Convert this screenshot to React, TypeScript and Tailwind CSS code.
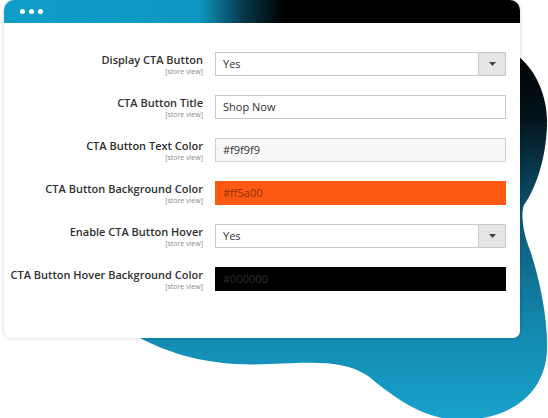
import { ChevronDown } from 'lucide-react';

type Row = {
  label: string;
  kind: 'select' | 'text';
  value: string;
  box?: string;
  text?: string;
};

const rows: Row[] = [
  { label: 'Display CTA Button', kind: 'select', value: 'Yes' },
  { label: 'CTA Button Title', kind: 'text', value: 'Shop Now', box: 'bg-white border-[#c9c9c9]', text: 'text-[#333]' },
  { label: 'CTA Button Text Color', kind: 'text', value: '#f9f9f9', box: 'bg-[#f7f7f7] border-[#cfcfcf]', text: 'text-[#333]' },
  { label: 'CTA Button Background Color', kind: 'text', value: '#ff5a00', box: 'bg-[#ff5a14] border-[#ff5a14]', text: 'text-[#8a3106]' },
  { label: 'Enable CTA Button Hover', kind: 'select', value: 'Yes' },
  { label: 'CTA Button Hover Background Color', kind: 'text', value: '#000000', box: 'bg-black border-black', text: 'text-[#2e2e2e]' },
];

function Blob() {
  return (
    <svg className="absolute inset-0 w-[548px] h-[418px]" viewBox="0 0 548 418">
      <defs>
        <linearGradient id="blobFill" x1="0" y1="55" x2="0" y2="418" gradientUnits="userSpaceOnUse">
          <stop offset="0" stopColor="#000000" />
          <stop offset="0.18" stopColor="#03161f" />
          <stop offset="0.45" stopColor="#0c5a75" />
          <stop offset="0.75" stopColor="#1388ae" />
          <stop offset="1" stopColor="#18a2cb" />
        </linearGradient>
      </defs>
      <path
        d="M 420 70 L 518 56 C 538 72, 548 100, 547 125 C 546 160, 535 190, 524 205 C 520 215, 524 235, 530 250 C 540 280, 548 320, 547 350 C 545 395, 510 418, 465 420 C 425 421, 395 398, 368 376 C 345 360, 315 362, 270 364 C 215 367, 175 356, 140 338 L 300 200 Z"
        fill="url(#blobFill)"
      />
    </svg>
  );
}

export default function App() {
  return (
    <div className="relative w-[548px] h-[418px] bg-white overflow-hidden" style={{ fontFamily: '"Open Sans", "Liberation Sans", sans-serif' }}>
      <Blob />
      <div className="relative ml-[4px] w-[516px] h-[338px] bg-white rounded-t-[10px] rounded-b-[7px] shadow-[0_0_4px_rgba(0,0,0,0.18)] overflow-hidden">
        {/* Title bar */}
        <div className="h-[23px] flex items-center gap-[4px] pl-[16px] bg-[linear-gradient(90deg,#0d9ec9_0px,#0e98c1_195px,#06374a_240px,#000_280px,#000_100%)]">
          <span className="w-[5px] h-[5px] rounded-full bg-white" />
          <span className="w-[5px] h-[5px] rounded-full bg-white" />
          <span className="w-[5px] h-[5px] rounded-full bg-white" />
        </div>

        {/* Form */}
        <div className="flex flex-col gap-[19px] pt-[29px]">
          {rows.map((row) => (
            <div key={row.label} className="flex items-start gap-[12px]">
              <div className="w-[199px] flex flex-col items-end pt-[1px]">
                <span className="text-[11px] leading-[14px] font-semibold text-[#303030] whitespace-nowrap">{row.label}</span>
                <span className="text-[7px] leading-[9px] text-[#8a8a8a]">[store view]</span>
              </div>
              {row.kind === 'select' ? (
                <div className="w-[291px] h-[24px] flex border border-[#c9c9c9] bg-white">
                  <div className="flex-1 flex items-center pl-[7px] text-[11px] text-[#333]">{row.value}</div>
                  <div className="w-[27px] flex items-center justify-center bg-[#e6e6e6] border-l border-[#c9c9c9]">
                    <svg width="7" height="4" viewBox="0 0 7 4">
                      <path d="M0 0 L7 0 L3.5 4 Z" fill="#444" />
                    </svg>
                  </div>
                </div>
              ) : (
                <div className={`w-[291px] h-[24px] flex items-center pl-[7px] border text-[11px] ${row.box} ${row.text}`}>
                  {row.value}
                </div>
              )}
            </div>
          ))}
        </div>
      </div>
    </div>
  );
}
